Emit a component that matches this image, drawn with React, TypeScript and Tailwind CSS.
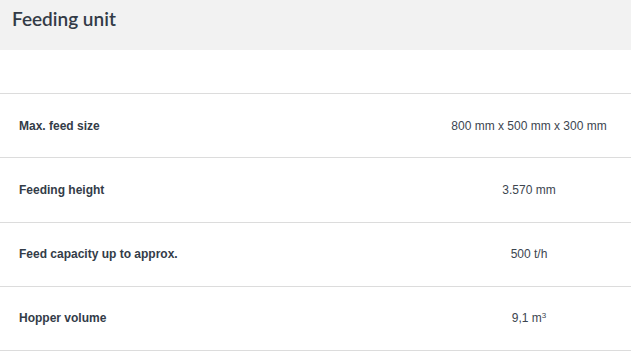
import React from "react";

const rows: { label: string; value: React.ReactNode }[] = [
  { label: "Max. feed size", value: "800 mm x 500 mm x 300 mm" },
  { label: "Feeding height", value: "3.570 mm" },
  { label: "Feed capacity up to approx.", value: "500 t/h" },
  {
    label: "Hopper volume",
    value: (
      <>
        9,1 m<sup className="text-[8px] -top-[0.6em]">3</sup>
      </>
    ),
  },
];

export default function App() {
  return (
    <div className="w-[631px] h-[351px] bg-white overflow-hidden font-['Liberation_Sans',sans-serif]">
      {/* Header */}
      <div className="h-[50px] bg-[#f2f2f2] px-3 pt-[6px]">
        <h2 className="text-[19px] leading-[26px] font-semibold text-[#333b47] font-['Lato',sans-serif]">
          Feeding unit
        </h2>
      </div>

      <div className="h-[43px]" />

      {/* Spec table */}
      <div className="border-t border-[#dcdcdc]">
        {rows.map((row, i) => (
          <div
            key={i}
            className="flex items-center h-[64.25px] border-b border-[#dcdcdc] text-[12px]"
          >
            <div className="flex-1 pl-[19px] font-bold text-[#333c48]">{row.label}</div>
            <div className="w-[204px] text-center text-[#3c4550]">{row.value}</div>
          </div>
        ))}
      </div>
    </div>
  );
}
